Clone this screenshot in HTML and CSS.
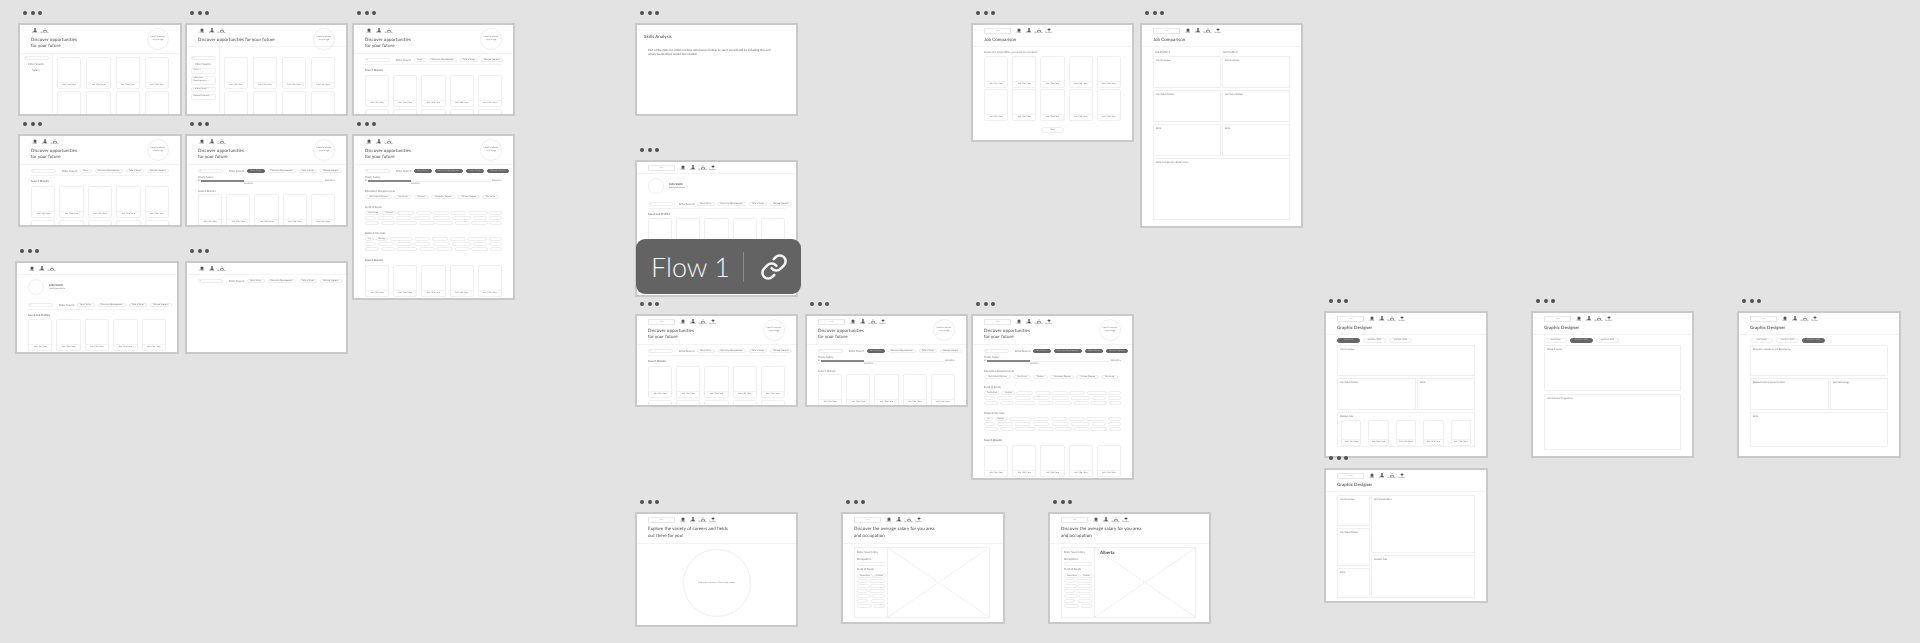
FILE: index.html
```html
<!DOCTYPE html>
<html lang="en">
<head>
    <meta charset="UTF-8">
    <title>Wireframe flows</title>
    <link rel="stylesheet" href="styles.css">
</head>
<body>
    <!-- Icones usados na barra de cada tela -->
    <svg class="sprite" aria-hidden="true">
        <symbol id="i-home" viewBox="0 0 10 10"><path d="M5 .5 10 5H8.500v4.500h-7V5H0z"/></symbol>
        <symbol id="i-profile" viewBox="0 0 10 10"><circle cx="5" cy="2.600" r="2.300"/><path d="M.8 9.800C1 6.600 2.800 5.600 5 5.600s4 1 4.200 4.200z"/></symbol>
        <symbol id="i-roadmap" viewBox="0 0 10 10"><path d="M3.200 3 5 .6 6.800 3z"/><path d="M0 9.500 1.500 5.400h7L10 9.500H7V7H3v2.500z"/></symbol>
        <symbol id="i-explore" viewBox="0 0 10 10"><path d="M5 .4 9.600 4 6 5.500 5.500 9.600 3.600 5.800.4 4.600z"/></symbol>
    </svg>

    <main class="canvas" id="canvas"></main>

    <!-- Etiqueta do fluxo, por cima da tela -->
    <div class="flow-tag">
        <span class="flow-name">Flow 1</span>
        <svg class="flow-link" viewBox="0 0 24 24">
            <path d="M10 13a5 5 0 0 0 7.540.54l3-3a5 5 0 0 0-7.070-7.070l-1.720 1.710"/>
            <path d="M14 11a5 5 0 0 0-7.540-.54l-3 3a5 5 0 0 0 7.070 7.070l1.710-1.710"/>
        </svg>
    </div>

    <script src="script.js"></script>
</body>
</html>
```

FILE: styles.css
```css
/* Geral */
html, body {
    margin: 0;
    padding: 0;
    background-color: #e3e3e3;
    font-family: Lato, "Open Sans", sans-serif;
    color: #555555;
    text-rendering: geometricPrecision;
    overflow: hidden;
}
.sprite {
    display: none;
}
.canvas {
    position: relative;
    width: 1920px;
    height: 643px;
    overflow: hidden;
}

/* Janela solta no canvas */
.window {
    position: absolute;
    display: flex;
    flex-direction: column;
    filter: blur(0.3px);
}
.dots {
    display: flex;
    gap: 3.500px;
    height: 4px;
    margin: 0 0 8px 5px;
}
.dots i {
    width: 4px;
    height: 4px;
    border-radius: 50%;
    background-color: #505050;
}
.frame {
    display: flex;
    flex-direction: column;
    box-sizing: border-box;
    background-color: #ffffff;
    border: 2px solid #c9c9c9;
    overflow: hidden;
}

/* Cabecalho */
.head {
    position: relative;
    flex: none;
    padding: 2px 11px 4px;
    border-bottom: 1px solid #f3f3f3;
}
.head.one {
    padding-bottom: 3px;
}
.head.bare {
    padding-bottom: 1px;
}
.head.loose {
    padding-bottom: 4px;
}
.head.loose .title {
    margin-top: 1px;
    line-height: 7px;
}
.top-row {
    display: flex;
    align-items: flex-start;
    gap: 4px;
    height: 8px;
}
.logo {
    display: flex;
    align-items: center;
    justify-content: center;
    box-sizing: border-box;
    width: 27px;
    height: 6px;
    margin-top: 1px;
    border: 1px solid #e8e8e8;
    font-size: 2px;
    color: #bbbbbb;
}
.nav {
    display: flex;
    gap: 3px;
}
.nav-item {
    display: flex;
    flex-direction: column;
    align-items: center;
    width: 7px;
    padding-top: 1px;
    font-size: 2px;
    line-height: 3px;
    color: #777777;
    white-space: nowrap;
}
.icon {
    display: block;
    width: 4px;
    height: 4px;
    fill: #555555;
}
.title {
    margin: 2px 0 0;
    font-size: 4.400px;
    font-weight: 400;
    line-height: 6px;
    letter-spacing: 0.100px;
    color: #444444;
    white-space: nowrap;
}
.title.strong {
    font-weight: 700;
    color: #666666;
}
.round-pic {
    position: absolute;
    top: 3px;
    right: 11px;
    display: flex;
    align-items: center;
    justify-content: center;
    box-sizing: border-box;
    width: 22px;
    height: 22px;
    padding: 0 1px;
    border: 1px solid #f0f0f0;
    border-radius: 50%;
    font-size: 2.200px;
    line-height: 3px;
    text-align: center;
    color: #777777;
}

/* Corpo */
.body {
    padding: 3px 11px 0;
    min-height: 0;
}
.label {
    font-size: 2.800px;
    line-height: 4px;
    color: #777777;
    white-space: nowrap;
}
.section {
    margin: 6px 0 2px;
}
.section.late {
    margin: 7px 0 3px;
    color: #555555;
}
.after-slider {
    margin: 6px 0 1px;
}
.results {
    margin: 3px 0 3px;
    color: #555555;
}
.saved {
    margin: 3px 0 2px;
    color: #555555;
}
.filters {
    display: flex;
    align-items: center;
    gap: 3px;
    height: 5px;
    padding-bottom: 2px;
    border-bottom: 1px solid #f3f3f3;
}
.filters.plain {
    border-bottom: none;
}
.filters .label {
    width: 15px;
}
.search {
    flex: none;
    box-sizing: border-box;
    width: 25px;
    height: 4px;
    margin-right: 3px;
    padding-left: 1px;
    border: 1px solid #eeeeee;
    border-radius: 2px;
    font-size: 2px;
    line-height: 2px;
    color: #666666;
}
.chip {
    flex: none;
    box-sizing: border-box;
    height: 4px;
    padding: 0 2px;
    border: 1px solid #eeeeee;
    border-radius: 2px;
    font-size: 2.100px;
    line-height: 2px;
    color: #777777;
    white-space: nowrap;
}
.chip.on {
    background-color: #666666;
    border-color: #666666;
    color: #bbbbbb;
}

/* Grade de cartoes */
.cards {
    display: grid;
    gap: 2px 4px;
}
.cards.five {
    grid-template-columns: repeat(5, 1fr);
}
.cards.four {
    grid-template-columns: repeat(4, 1fr);
    column-gap: 5px;
}
.card {
    display: flex;
    flex-direction: column;
    box-sizing: border-box;
    height: 32px;
    border: 1px solid #f0f0f0;
    border-radius: 2px;
}
.card-pic {
    flex: 1;
}
.card-name {
    height: 5px;
    border-top: 1px solid #f3f3f3;
    font-size: 2.200px;
    line-height: 5px;
    text-align: center;
    color: #777777;
    white-space: nowrap;
}

/* Barra lateral */
.split {
    display: flex;
    flex: 1;
    min-height: 0;
}
.side {
    display: flex;
    flex: none;
    flex-direction: column;
    align-items: center;
    gap: 2px;
    box-sizing: border-box;
    width: 33px;
    padding: 2px 4px;
    border-right: 1px solid #f3f3f3;
}
.side .search {
    margin-right: 0;
}
.side-main {
    flex: 1;
    padding: 3px 11px 0 4px;
}
.split.low .side {
    padding-top: 9px;
}
.split.low .side-main {
    padding-top: 10px;
}
.drop {
    display: flex;
    align-items: center;
    justify-content: space-between;
    box-sizing: border-box;
    width: 25px;
    min-height: 5px;
    padding: 0 1px 0 2px;
    border: 1px solid #f0f0f0;
    border-radius: 2px;
    font-size: 2.200px;
    line-height: 3.500px;
    color: #777777;
}
.side .label {
    text-align: center;
}

/* Salario */
.slider {
    display: flex;
    align-items: center;
    gap: 1px;
    height: 4px;
    font-size: 2px;
    color: #777777;
    white-space: nowrap;
}
.track {
    position: relative;
    flex: 1;
    height: 1px;
    background-color: #f0f0f0;
}
.fill {
    height: 2px;
    margin-top: -0.500px;
    background-color: #858585;
}
.note {
    position: absolute;
    top: 2px;
    font-size: 2px;
    line-height: 3px;
}
.pill-row {
    display: flex;
    justify-content: space-between;
    margin-bottom: 1px;
}
.chip.blank {
    min-width: 4px;
}
.left-chips {
    justify-content: flex-start;
    gap: 2px;
}
.left-chips .chip {
    padding: 0 3px;
}

/* Perfil */
.profile {
    display: flex;
    align-items: center;
    gap: 5px;
    padding: 1px 0 7px;
}
.avatar {
    flex: none;
    box-sizing: border-box;
    width: 16px;
    height: 16px;
    border: 1px solid #f0f0f0;
    border-radius: 50%;
}
.who {
    font-size: 2.800px;
    line-height: 4px;
    font-weight: 700;
}
.who small {
    display: block;
    font-size: 2px;
    font-weight: 400;
    color: #777777;
}

/* Caixas de texto */
.intro {
    padding: 7px 7px 0;
}
.note-text {
    margin: 8px 12px 0 4px;
    font-size: 2.950px;
    line-height: 4px;
    color: #666666;
}
.boxes {
    display: grid;
    gap: 2px 1px;
    flex: none;
}
.box {
    box-sizing: border-box;
    padding: 2px;
    border: 1px solid #f0f0f0;
    font-size: 2.400px;
    line-height: 3px;
    color: #777777;
    white-space: nowrap;
}
.box .cards {
    margin: 2px 1px 0;
    gap: 7px;
}
.box .card {
    height: 26px;
}
.wide {
    grid-column: 1 / -1;
}
.tall {
    grid-row: span 2;
}
.boxes.apart {
    row-gap: 3px;
}
.tabs {
    display: flex;
    gap: 3px;
    margin-bottom: 2px;
}
.tabs .chip {
    width: 23px;
    height: 5px;
    padding: 0;
    border-radius: 3px;
    line-height: 3px;
    text-align: center;
}
.next {
    width: 23px;
    margin: 6px auto 0;
    height: 6px;
    line-height: 4px;
    border-radius: 3px;
    text-align: center;
}
.pick {
    margin-bottom: 2px;
}
.pick + .cards {
    row-gap: 1px;
}
.col-names {
    display: grid;
    grid-template-columns: 1fr 1fr;
    margin-bottom: 2px;
    padding-left: 2px;
}

/* Mapa */
.map {
    display: flex;
    box-sizing: border-box;
    height: 71px;
    margin-right: 2px;
    border: 1px solid #f0f0f0;
}
.map-side {
    flex: none;
    box-sizing: border-box;
    width: 33px;
    padding: 2px;
    border-right: 1px solid #f0f0f0;
}
.map-side .label {
    margin-bottom: 3px;
}
.map-side .chip {
    padding: 0 2px;
    font-size: 2px;
}
.map-input {
    box-sizing: border-box;
    height: 4px;
    margin: -2px 0 1px;
    border: 1px solid #f0f0f0;
    border-radius: 2px;
}
.map-pic {
    flex: 1;
    padding: 2px 5px;
    font-size: 4.400px;
    font-weight: 700;
    background:
        linear-gradient(to top right, transparent calc(50% - 0.5px), #ebebeb, transparent calc(50% + 0.5px)),
        linear-gradient(to bottom right, transparent calc(50% - 0.5px), #ebebeb, transparent calc(50% + 0.5px));
}
.wheel-wrap {
    display: flex;
    justify-content: center;
    padding-top: 5px;
}
.wheel {
    display: flex;
    align-items: center;
    justify-content: center;
    box-sizing: border-box;
    width: 68px;
    height: 68px;
    border: 1px solid #f0f0f0;
    border-radius: 50%;
    font-size: 2.200px;
    color: #888888;
}

/* Etiqueta Flow 1 */
.flow-tag {
    position: absolute;
    left: 636px;
    top: 239px;
    display: flex;
    align-items: center;
    box-sizing: border-box;
    width: 165px;
    height: 55px;
    padding-left: 15px;
    border-radius: 9px;
    background-color: #636363;
    color: #f4f4f4;
}
.flow-name {
    width: 76px;
    padding-right: 16px;
    border-right: 1px solid #8a8a8a;
    font-size: 27px;
    font-weight: 300;
    line-height: 30px;
    white-space: nowrap;
}
.flow-link {
    width: 28px;
    height: 28px;
    margin-left: 16px;
    fill: none;
    stroke: #f4f4f4;
    stroke-width: 2.200;
    stroke-linecap: round;
    stroke-linejoin: round;
}
```

FILE: script.js
```js
// Pecas repetidas dos wireframes
const NAV = {
    home: ['i-home', 'Home'],
    profile: ['i-profile', 'Profile'],
    roadmap: ['i-roadmap', 'Roadmap'],
    explore: ['i-explore', 'Explore']
};

function nav(names, logo) {
    const items = names.map(function (n) {
        return `<div class="nav-item"><svg class="icon"><use href="#${NAV[n][0]}"/></svg>${NAV[n][1]}</div>`;
    }).join('');
    return `<div class="top-row">${logo ? '<div class="logo">Logo</div>' : ''}<div class="nav">${items}</div></div>`;
}

// opts: lines do titulo, pic = foto redonda, strong, loose
function head(names, logo, opts) {
    const o = opts || {};
    const lines = o.lines || [];
    let cls = 'head';
    if (!lines.length) cls += ' bare';
    if (lines.length === 1) cls += ' one';
    if (o.loose) cls += ' loose';
    const title = lines.length ? `<h2 class="title${o.strong ? ' strong' : ''}">${lines.join('<br>')}</h2>` : '';
    const round = o.pic ? '<div class="round-pic">Insert landmark map image</div>' : '';
    return `<header class="${cls}">${nav(names, logo)}${title}${round}</header>`;
}

// So os primeiros "named" cartoes aparecem inteiros, o resto fica cortado pela tela
function cards(n, cols, named) {
    const shown = named === undefined ? n : named;
    let out = '';
    for (let i = 0; i < n; i++) {
        const name = i < shown ? '<div class="card-name">Job Title Here</div>' : '';
        out += `<div class="card"><div class="card-pic"></div>${name}</div>`;
    }
    return `<div class="cards ${cols}">${out}</div>`;
}

function filters(on, plain, first) {
    const names = [first || 'Yearly Salary', 'Education Requirements', 'Field of Study', 'Related Interests'];
    const chips = names.map(function (n, i) {
        return `<span class="chip${i < on ? ' on' : ''}">${n}</span>`;
    }).join('');
    return `<div class="filters${plain ? ' plain' : ''}"><div class="search">&#8981;</div><span class="label">Filter Search</span>${chips}</div>`;
}

function slider() {
    return '<div class="label">Yearly Salary</div>' +
        '<div class="slider"><span>$0</span><div class="track"><div class="fill" style="width:35%"></div>' +
        '<span class="note" style="left:35%">$40,000 +</span></div><span>$100,000 +</span></div>';
}

function pills(rows) {
    return rows.map(function (row) {
        const items = row.map(function (w) {
            if (typeof w === 'string') return `<span class="chip">${w}</span>`;
            return `<span class="chip blank" style="width:${w}px"></span>`;
        }).join('');
        return `<div class="pill-row">${items}</div>`;
    }).join('');
}

function search(first) {
    return `<div class="body">${filters(0, false, first)}<div class="label results">Search Results</div>${cards(10, 'five', 5)}</div>`;
}

function salarySearch() {
    return '<div class="body">' + filters(1, true) + slider() +
        '<div class="label after-slider">Search Results</div>' + cards(5, 'five') + '</div>';
}

function sidebar(open) {
    const list = open
        ? '<div class="drop">Salary &#8964;</div><div class="drop">Education Requirements &#8964;</div>' +
          '<div class="drop">Field of Study &#8964;</div><div class="drop">Related Interests &#8964;</div>'
        : '<div class="label">Salary</div>';
    return `<div class="split${open ? ' low' : ''}"><div class="side"><div class="search">&#8981;</div><div class="label">Filter Search</div>${list}</div>` +
        `<div class="side-main">${cards(8, 'four', 4)}</div></div>`;
}

function profile() {
    return '<div class="body"><div class="profile"><div class="avatar"></div><div class="who">John Smith<small>jsmith@email.com</small></div></div>' +
        filters(0) + '<div class="label saved">Saved Job Profiles</div>' + cards(10, 'five', 5) + '</div>';
}

function box(name, cls, inner) {
    return `<div class="box ${cls || ''}">${name}${inner || ''}</div>`;
}

function designerTabs(on) {
    const names = ['Job Profile', 'Job Data 2021', 'Job Data 2022'];
    return '<div class="tabs">' + names.map(function (n, i) {
        return `<span class="chip${i === on ? ' on' : ''}">${n}</span>`;
    }).join('') + '</div>';
}

function grid(cols, rows, inner, cls) {
    return `<div class="boxes ${cls || ''}" style="grid-template-columns:${cols};grid-template-rows:${rows}">${inner}</div>`;
}

function mapBody(place) {
    const rows = [['Agriculture', 'Aviation'], [11, 16], [13, 15], [11, 16], [14, 13], [11, 14], [15, 11]];
    return '<div class="body"><div class="map"><div class="map-side">' +
        '<div class="label">Enter Search Key</div><div class="label">Occupation</div><div class="map-input"></div>' +
        `<div class="label">Field of Study</div>${pills(rows)}</div><div class="map-pic">${place}</div></div></div>`;
}

const FIELDS = [
    [11, 16, 16, 16, 17, 19, 14, 13],
    [14, 14, 21, 16, 17, 15, 17, 12]
];

function fullFilters() {
    return '<div class="body">' + filters(4, true) + slider() +
        '<div class="label section">Education Requirements</div>' +
        '<div class="pill-row left-chips"><span class="chip">High School Diploma</span><span class="chip">Certificate</span><span class="chip">Diploma</span><span class="chip">Bachelors Degree</span><span class="chip">Masters Degree</span><span class="chip">Doctorate</span></div>' +
        '<div class="label section">Field of Study</div>' +
        pills([['Agriculture', 'Aviation', 17, 16, 16, 16, 20, 13], FIELDS[0], FIELDS[1]]) +
        '<div class="label section">Related Interests</div>' +
        pills([['Art', 'Design', 23, 16, 16, 16, 20, 13], FIELDS[0], FIELDS[1]]) +
        '<div class="label section late">Search Results</div>' + cards(10, 'five', 5) + '</div>';
}

const TWO = { lines: ['Discover opportunities', 'for your future'], pic: true };
const THREE = ['home', 'profile', 'roadmap'];
const FOUR = ['home', 'profile', 'roadmap', 'explore'];
const SALARY = { lines: ['Discover the average salary for you area', 'and occupation'], loose: true };
const DESIGNER = { lines: ['Graphic Designer'], strong: true };
const COMPARE = { lines: ['Job Comparison'] };

// x, y, largura, altura, conteudo de cada tela
const screens = [
    [18, 23, 164, 93, head(['profile', 'roadmap'], false, TWO) + sidebar(false)],
    [185, 23, 163, 93, head(THREE, false, { lines: ['Discover opportunities for your future'], pic: true }) + sidebar(true)],
    [352, 23, 163, 93, head(THREE, false, TWO) + search('Salary')],
    [18, 134, 164, 93, head(THREE, false, TWO) + search('Salary')],
    [185, 134, 163, 93, head(THREE, false, TWO) + salarySearch()],
    [352, 134, 163, 166, head(THREE, false, TWO) + fullFilters()],
    [15, 261, 164, 93, head(THREE, false) + profile()],
    [185, 261, 163, 93, head(THREE, false) + '<div class="body">' + filters(0, true) + '</div>'],

    [635, 23, 163, 93, '<div class="body intro"><h2 class="title">Skills Analysis</h2><p class="note-text">Part of the Data Sci initial mockup, will discuss further to see if we will still be including this and what visualizations would be included.</p></div>'],
    [635, 160, 163, 137, head(FOUR, true) + profile()],
    [635, 314, 163, 93, head(FOUR, true, TWO) + search()],
    [805, 314, 163, 93, head(FOUR, true, TWO) + salarySearch()],
    [971, 314, 163, 166, head(FOUR, true, TWO) + fullFilters()],

    [635, 512, 163, 115, head(FOUR, true, { lines: ['Explore the variety of careers and fields', 'out there for you!'], loose: true }) + '<div class="wheel-wrap"><div class="wheel">Interactive version of the career wheel</div></div>'],
    [841, 512, 164, 112, head(FOUR, true, SALARY) + mapBody('')],
    [1048, 512, 163, 112, head(FOUR, true, SALARY) + mapBody('Alberta')],

    [971, 23, 163, 119, head(FOUR, true, COMPARE) + '<div class="body"><div class="label pick">Select the job profiles you want to compare:</div>' + cards(10, 'five') + '<div class="chip next">Next</div></div>'],
    [1140, 23, 163, 205, head(FOUR, true, COMPARE) + '<div class="body"><div class="col-names label"><span>Job Profile 1</span><span>Job Profile 2</span></div>' +
        grid('1fr 1fr', '32px 32px 32px 62px', box('Job Overview') + box('Job Overview') + box('Job Tasks/Duties') + box('Job Tasks/Duties') + box('Skills') + box('Skills') + box('Skills Comparison (Radar chart)', 'wide')) + '</div>'],

    [1324, 311, 164, 147, head(FOUR, true, DESIGNER) + '<div class="body">' + designerTabs(0) +
        grid('79px 1fr', '31px 32px 35px', box('Job Overview', 'wide') + box('Job Tasks/Duties') + box('Skills') + box('Related Jobs', 'wide', cards(5, 'five'))) + '</div>'],
    [1531, 311, 163, 147, head(FOUR, true, DESIGNER) + '<div class="body">' + designerTabs(1) +
        grid('1fr', '46px 56px', box('Wage Analysis') + box('Job Outlook/Projections'), 'apart') + '</div>'],
    [1737, 311, 164, 147, head(FOUR, true, DESIGNER) + '<div class="body">' + designerTabs(2) +
        grid('79px 1fr', '31px 32px 35px', box('Education related to job Experience', 'wide') + box('Related Field of study/location') + box('Skill technology') + box('Skills', 'wide')) + '</div>'],
    [1324, 468, 164, 135, head(FOUR, true, DESIGNER) + '<div class="body">' +
        grid('33px 1fr', '31px 25px 11px 30px', box('Job Overview') + box('Skill Visualization', 'tall') + box('Job Tasks/Duties', 'tall') + box('Related Jobs', 'tall') + box('Skills')) + '</div>']
];

const canvas = document.getElementById('canvas');
canvas.innerHTML = screens.map(function (s) {
    return `<section class="window" style="left:${s[0]}px;top:${s[1] - 12}px;width:${s[2]}px">` +
        '<div class="dots"><i></i><i></i><i></i></div>' +
        `<div class="frame" style="height:${s[3]}px">${s[4]}</div></section>`;
}).join('');
```
